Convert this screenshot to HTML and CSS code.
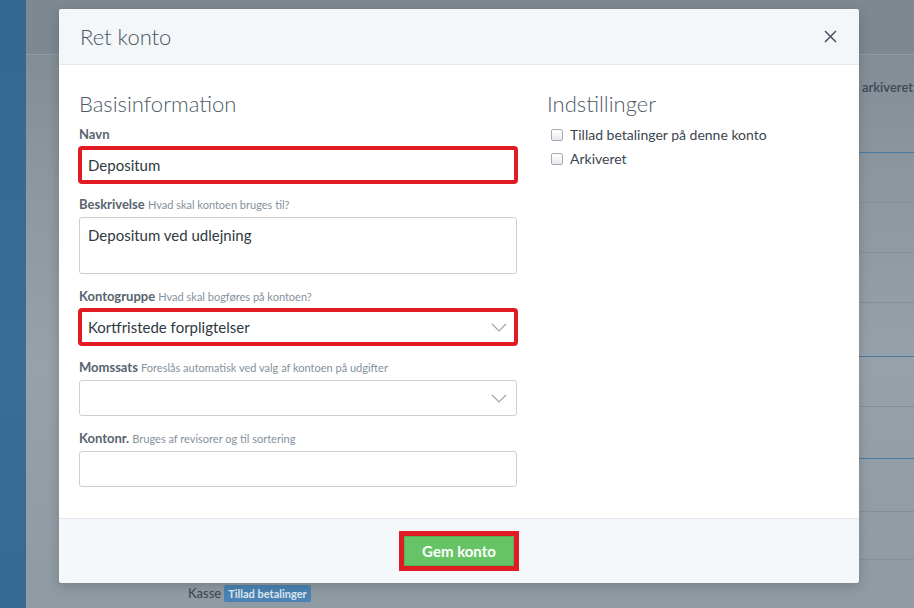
FILE: index.html
```html
<!DOCTYPE html>
<html lang="da">
<head>
<meta charset="utf-8">
<title>Ret konto</title>
<link rel="stylesheet" href="styles.css">
</head>
<body>
<div class="app">
  <aside class="sidebar"></aside>
  <main class="page">
    <header class="page-head"></header>
    <div class="table">
      <div class="thead"><span class="th-archived">arkiveret</span></div>
      <div class="group">
        <div class="row r1"></div>
        <div class="row r2"></div>
        <div class="row r3"></div>
        <div class="row r4 sep"></div>
      </div>
      <div class="group">
        <div class="row r5"></div>
        <div class="row r6 sep"></div>
      </div>
      <div class="group">
        <div class="row r7"></div>
        <div class="row r8"></div>
        <div class="row r9"><span class="row-name">Kasse</span><span class="badge">Tillad betalinger</span></div>
      </div>
    </div>
  </main>
</div>

<div class="modal">
  <div class="modal-head">
    <h2 class="modal-title">Ret konto</h2>
    <button class="close" aria-label="Luk">
      <svg width="13" height="13" viewBox="0 0 13 13"><path d="M1 1 L12 12 M12 1 L1 12" stroke="#47525c" stroke-width="1.5" fill="none"/></svg>
    </button>
  </div>
  <div class="modal-body">
    <section class="col-main">
      <h3 class="section-title">Basisinformation</h3>
      <div class="field">
        <label class="label">Navn</label>
        <div class="control hl">Depositum</div>
      </div>
      <div class="field f2">
        <label class="label">Beskrivelse <span class="hint">Hvad skal kontoen bruges til?</span></label>
        <div class="control textarea">Depositum ved udlejning</div>
      </div>
      <div class="field">
        <label class="label">Kontogruppe <span class="hint">Hvad skal bogføres på kontoen?</span></label>
        <div class="control select hl"><span>Kortfristede forpligtelser</span>
          <svg class="chev" width="16" height="9" viewBox="0 0 16 9"><path d="M1 1 L8 8 L15 1" stroke="#9ba6b0" stroke-width="1.2" fill="none"/></svg>
        </div>
      </div>
      <div class="field">
        <label class="label">Momssats <span class="hint">Foreslås automatisk ved valg af kontoen på udgifter</span></label>
        <div class="control select"><span></span>
          <svg class="chev" width="16" height="9" viewBox="0 0 16 9"><path d="M1 1 L8 8 L15 1" stroke="#9ba6b0" stroke-width="1.2" fill="none"/></svg>
        </div>
      </div>
      <div class="field">
        <label class="label">Kontonr. <span class="hint">Bruges af revisorer og til sortering</span></label>
        <div class="control"></div>
      </div>
    </section>
    <section class="col-side">
      <h3 class="section-title">Indstillinger</h3>
      <label class="check"><span class="box"></span>Tillad betalinger på denne konto</label>
      <label class="check"><span class="box"></span>Arkiveret</label>
    </section>
  </div>
  <div class="modal-foot">
    <button class="btn-save">Gem konto</button>
  </div>
</div>
</body>
</html>
```

FILE: styles.css
```css
* { box-sizing: border-box; }

html, body {
  margin: 0;
  padding: 0;
}

body {
  width: 914px;
  height: 608px;
  overflow: hidden;
  font-family: Lato, "Open Sans", "Liberation Sans", sans-serif;
  background: #8d98a1;
  position: relative;
}

.app {
  display: flex;
  height: 608px;
}

.sidebar {
  width: 26px;
  flex: none;
  background: linear-gradient(180deg, #336892 0%, #386d98 60%, #356a95 100%);
}

.page {
  flex: 1;
  background: linear-gradient(180deg, #7e8992 0%, #8c979f 30%, #97a1a9 60%, #8f9aa2 100%);
}

.page-head {
  height: 55px;
  border-bottom: 1px solid #8f9aa3;
  background: #7d8891;
}

.table {
  margin-left: 60px;
}

.thead {
  height: 98px;
  position: relative;
  border-bottom: 1px solid #4c79a0;
}

.th-archived {
  position: absolute;
  left: 776px;
  top: 24px;
  white-space: nowrap;
  font-size: 13px;
  font-weight: 600;
  color: #3d4954;
}

.row {
  height: 50px;
  border-bottom: 1px solid #848f98;
  position: relative;
}

.r4 { height: 54px; }
.r5 { height: 50px; }
.r6 { height: 52px; }
.r7 { height: 53px; }
.r8 { height: 48px; }

.row.sep {
  border-bottom-color: #4c79a0;
}

.r9 {
  border-bottom: none;
  display: flex;
  align-items: center;
  gap: 3px;
  padding-left: 102px;
  padding-top: 16px;
}

.row-name {
  font-size: 13px;
  color: #3b4550;
}

.badge {
  background: #4a83b4;
  color: #dfe7ee;
  font-size: 11px;
  font-weight: 700;
  padding: 2px 4px;
  border-radius: 2px;
}

/* Modal */
.modal {
  position: absolute;
  left: 59px;
  top: 9px;
  width: 800px;
  background: #fff;
  border-radius: 3px;
  box-shadow: 0 3px 12px rgba(0, 0, 0, 0.18);
  overflow: hidden;
}

.modal-head {
  height: 56px;
  background: #f4f7fa;
  border-bottom: 1px solid #e2e8ee;
  display: flex;
  align-items: center;
  justify-content: space-between;
  padding: 0 22px 0 21px;
}

.modal-title {
  margin: 0;
  font-size: 22px;
  font-weight: 300;
  color: #4a5661;
}

.close {
  border: 0;
  background: none;
  padding: 0;
  display: flex;
}

.modal-body {
  display: grid;
  grid-template-columns: 438px 1fr;
  column-gap: 30px;
  padding: 24px 20px 31px 20px;
}

.section-title {
  margin: 0;
  font-size: 22px;
  line-height: 30px;
  font-weight: 300;
  color: #4f5b66;
}

.field {
  margin-top: 13px;
}

.section-title + .field {
  margin-top: 6px;
}

.field.f2 {
  margin-top: 12px;
}

.label {
  display: block;
  height: 18px;
  font-size: 13px;
  line-height: 18px;
  font-weight: 700;
  color: #58646f;
}

.hint {
  font-size: 11px;
  font-weight: 400;
  color: #85919c;
}

.control {
  margin-top: 4px;
  height: 36px;
  border: 1px solid #c9d1d8;
  border-radius: 3px;
  padding: 0 8px;
  display: flex;
  align-items: center;
  font-size: 15px;
  color: #2f3942;
  background: #fff;
}

.control.textarea {
  height: 57px;
  align-items: flex-start;
  padding-top: 8px;
}

.control.select {
  justify-content: space-between;
  padding-right: 9px;
}

.hl {
  outline: 4px solid #e01b24;
  outline-offset: -3px;
}

.col-side .section-title {
  margin-bottom: 4px;
}

.check {
  display: flex;
  align-items: center;
  gap: 7px;
  font-size: 14px;
  line-height: 24px;
  color: #3b4650;
  padding-left: 4px;
}

.box {
  width: 12px;
  height: 12px;
  border: 1px solid #a3acb4;
  border-radius: 2px;
  background: linear-gradient(180deg, #ffffff 0%, #e6e9ec 100%);
}

.modal-foot {
  height: 65px;
  background: #f5f8fb;
  border-top: 1px solid #e3e8ee;
  display: flex;
  align-items: center;
  justify-content: center;
}

.btn-save {
  height: 30px;
  padding: 0 17px;
  background: #66c466;
  border: 1px solid #56b356;
  color: #fff;
  font-family: inherit;
  font-size: 15px;
  font-weight: 700;
  outline: 5px solid #e01b24;
  outline-offset: 0;
  border-radius: 0;
}
```
